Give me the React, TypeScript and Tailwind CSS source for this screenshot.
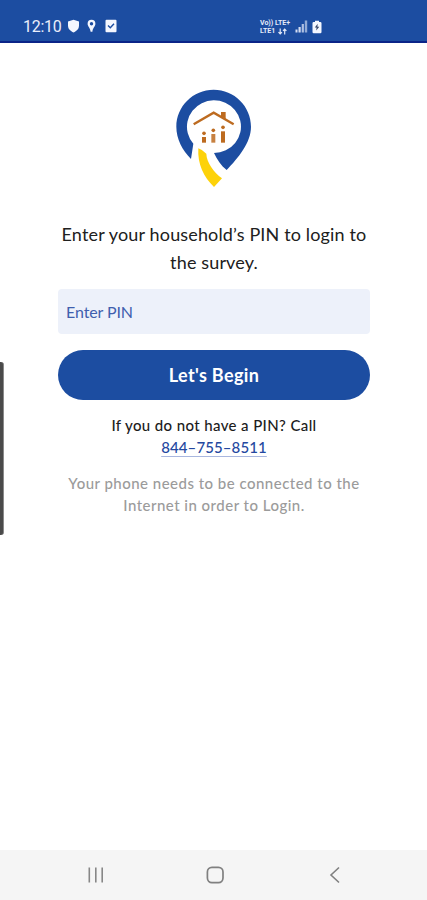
import { useState } from 'react';

function StatusBar() {
  return (
    <header className="flex h-[43px] shrink-0 items-end border-b-2 border-[#0b2488] bg-[#1c4da1] pb-[6px] pl-[23px] text-white">
      <span className="mb-[-1px] w-[39px] whitespace-nowrap font-['Roboto',sans-serif] text-[16px] leading-[18px] tracking-[-0.3px] text-[#e9eefb]">
        12:10
      </span>

      {/* Notification icons */}
      <svg className="ml-[5px] mb-[2px]" width="13" height="14" viewBox="0 0 13 14" fill="#f4f7ff">
        <path d="M6.5 .8 12 2.5V6.5C12 10 9.5 12.2 6.5 13.4 3.5 12.2 1 10 1 6.5V2.5Z" />
      </svg>
      <svg className="ml-[7px] mb-[2px]" width="9" height="14" viewBox="0 0 9 14" fill="#f4f7ff">
        <path fillRule="evenodd" d="M4.5.8A3.9 3.9 0 0 0 .6 4.7C.6 7.5 3.3 8.5 3.6 12.8H5.4C5.7 8.5 8.4 7.5 8.4 4.7A3.9 3.9 0 0 0 4.5.8ZM4.5 3.1A1.7 1.7 0 1 1 4.5 6.5 1.7 1.7 0 0 1 4.5 3.1Z" />
      </svg>
      <svg className="ml-[9px] mb-[2px]" width="12" height="14" viewBox="0 0 12 14">
        <rect x=".5" y=".7" width="11" height="12.6" rx="1" fill="#f4f7ff" />
        <path d="M3 6.5 5.3 8.7 9 4.7" fill="none" stroke="#1c4da1" strokeWidth="1.4" />
      </svg>

      {/* Network and battery */}
      <div className="ml-[143px] w-[34px] whitespace-nowrap font-['Roboto',sans-serif] text-[7px] font-bold leading-[8px] text-[#e4ebfa]">
        <div>Vo)) LTE+</div>
        <div className="flex items-center">
          LTE1
          <svg className="ml-[3px]" width="9" height="7" viewBox="0 0 9 7" fill="none" stroke="#e4ebfa" strokeWidth="1.2">
            <path d="M2.2.5V6M.5 4.2 2.2 6 3.9 4.2M6.7 6.5V1M5 2.8 6.7 1 8.4 2.8" />
          </svg>
        </div>
      </div>
      <svg className="ml-[1px] mb-[2px]" width="13" height="13" viewBox="0 0 13 13" fill="#d3ddf2">
        <rect x=".5" y="9.5" width="2" height="3" />
        <rect x="3.5" y="7" width="2.2" height="5.5" />
        <rect x="6.7" y="4" width="2.2" height="8.5" opacity=".8" />
        <rect x="9.8" y=".5" width="2.4" height="12" opacity=".65" />
      </svg>
      <svg className="ml-[4px] mb-[1px]" width="10" height="14" viewBox="0 0 10 14">
        <path d="M3 .7H7V2H8.3Q9.5 2 9.5 3.2V12Q9.5 13.3 8.3 13.3H1.7Q.5 13.3.5 12V3.2Q.5 2 1.7 2H3Z" fill="#f4f7ff" />
        <path d="M5.7 3.7 2.8 7.4H4.6L4.2 10.6 7.3 6.8H5.4Z" fill="#35466b" />
      </svg>
    </header>
  );
}

function Logo() {
  return (
    <svg className="mx-auto block" width="76" height="100" viewBox="35 27 228 300">
      <path
        fill="#1c4da1"
        fillRule="evenodd"
        d="M148 29C86 29 36 79 36 140C36 177 54 210 80 237L87 191A81 79 0 1 1 149 219C158 239 170 257 187 270C222 233 260 188 260 140C260 79 210 29 148 29Z"
      />
      <path fill="#fdd20a" d="M102 205Q116 210 126 221C127 248 148 276 173 295L149 321C118 292 99 252 102 205Z" />
      <path d="M88 133 148 98 208 133" fill="none" stroke="#bd6b20" strokeWidth="7" />
      <path d="M170 96H184V117L170 109Z" fill="#bd6b20" />
      <g fill="#bd6b20">
        <circle cx="119" cy="160" r="5.5" />
        <rect x="113" y="171" width="12" height="17" />
        <circle cx="147" cy="151" r="5.5" />
        <rect x="141" y="162" width="12" height="26" opacity=".85" />
        <circle cx="176" cy="142" r="5.5" />
        <rect x="170" y="154" width="12" height="34" />
      </g>
    </svg>
  );
}

function NavBar() {
  return (
    <nav className="flex h-[50px] shrink-0 items-center bg-[#f5f5f5] pl-[87px]">
      <button aria-label="Recents">
        <svg width="18" height="18" viewBox="0 0 18 18" fill="none" stroke="#878787" strokeWidth="1.6">
          <path d="M2.3 1.5V16.5M8.8 1.5V16.5M15.2 1.5V16.5" />
        </svg>
      </button>
      <button aria-label="Home" className="ml-[101px]">
        <svg width="18" height="18" viewBox="0 0 18 18" fill="none" stroke="#808080" strokeWidth="1.7">
          <rect x="1.4" y="1.4" width="15.6" height="15.2" rx="4.5" />
        </svg>
      </button>
      <button aria-label="Back" className="ml-[105px]">
        <svg width="12" height="18" viewBox="0 0 12 18" fill="none" stroke="#808080" strokeWidth="1.6">
          <path d="M10 1.5 2 9 10 16.5" />
        </svg>
      </button>
    </nav>
  );
}

export default function App() {
  const [pin, setPin] = useState('');

  return (
    <div className="relative flex h-screen flex-col overflow-hidden bg-white font-['Lato',sans-serif]">
      <StatusBar />

      <main className="flex-1 pl-[58px] pr-[57px] pt-[46px] text-center">
        <Logo />

        <h1 className="mt-[31px] whitespace-nowrap text-[18px] leading-[28px] tracking-[0.15px] text-[#202020]">
          Enter your household’s PIN to login to
          <br />
          the survey.
        </h1>

        <input
          value={pin}
          onChange={(e) => setPin(e.target.value)}
          placeholder="Enter PIN"
          className="mt-[13px] block h-[45px] w-full rounded-[4px] bg-[#edf1fa] pb-px pl-[8px] text-[16px] tracking-[-0.1px] text-[#2b4fa5] outline-none placeholder:text-[#3f5fae]"
        />

        <button className="mt-[16px] block h-[50px] w-full rounded-full bg-[#1c4da1] text-[18px] font-bold tracking-[0.35px] text-white">
          Let's Begin
        </button>

        <p className="mt-[14px] whitespace-nowrap text-[15px] font-medium leading-[22px] tracking-[0.38px] text-[#1c1c1c]">
          If you do not have a PIN? Call
          <br />
          <a
            href="tel:8447558511"
            className="tracking-[0.1px] text-[#2448a0] underline decoration-[#a9b7df] underline-offset-[3px]"
          >
            844–755–8511
          </a>
        </p>

        <p className="mt-[14px] whitespace-nowrap text-[15px] font-medium leading-[22px] tracking-[0.48px] text-[#9b9b9b]">
          Your phone needs to be connected to the
          <br />
          Internet in order to Login.
        </p>
      </main>

      <NavBar />

      {/* Edge panel handle */}
      <div className="absolute left-0 top-[362px] h-[173px] w-[4px] rounded-r-[3px] border-r border-[#8a8a8a] bg-[#4a4a4a]" />
    </div>
  );
}
